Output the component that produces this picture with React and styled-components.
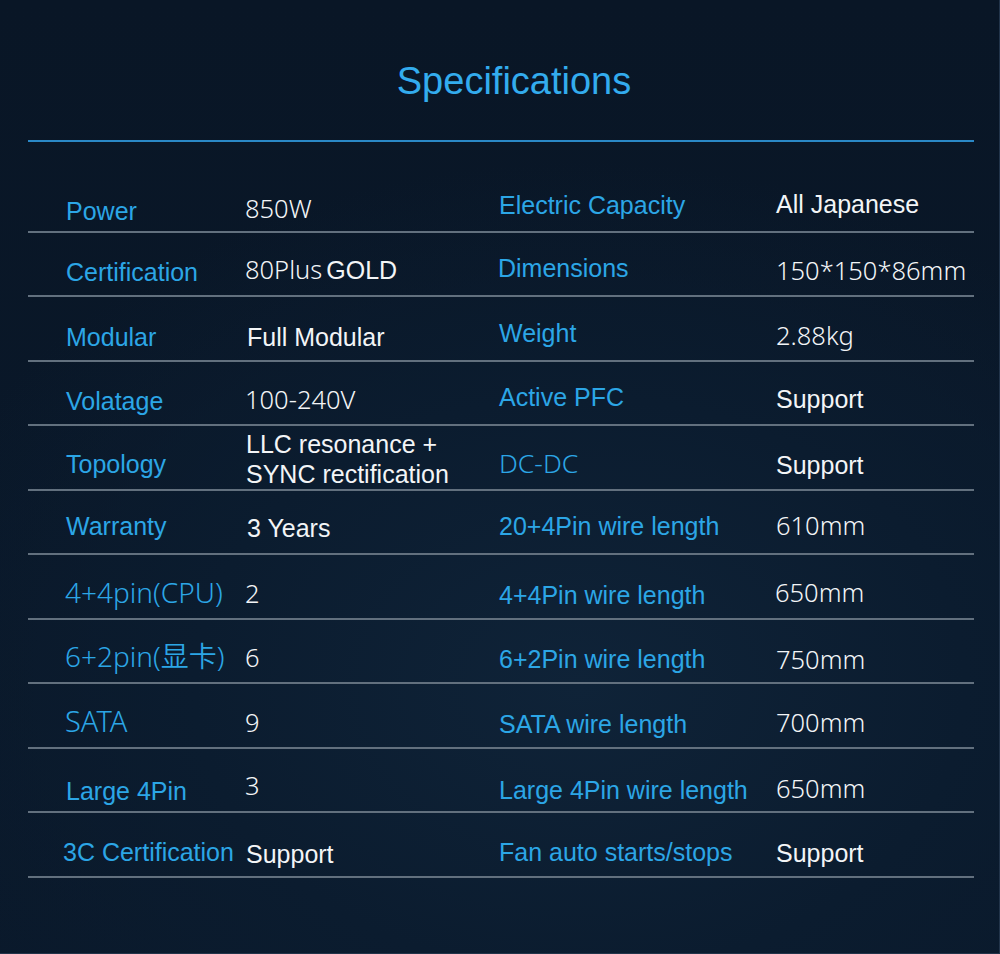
import React from 'react';
import styled, { createGlobalStyle } from 'styled-components';

const arial = '"Liberation Sans", Arial, sans-serif';
const yahei = '"Noto Sans", "Noto Sans CJK SC", sans-serif';

const GlobalStyle = createGlobalStyle`
  html, body {
    margin: 0;
    padding: 0;
    background: #0a1828;
  }
`;

const Page = styled.div`
  width: 1000px;
  height: 954px;
  box-sizing: border-box;
  border-right: 1px solid #22344a;
  border-bottom: 1px solid #22344a;
  background:
    radial-gradient(ellipse 70% 55% at 58% 72%, #0f2338 0%, #0b1c2f 55%, transparent 100%),
    linear-gradient(180deg, #091626 0%, #0a192b 100%);
  padding: 59px 25px 0 28px;
  overflow: hidden;
`;

const Title = styled.h1`
  margin: 0;
  padding-left: 26px;
  text-align: center;
  font-family: ${arial};
  font-weight: 400;
  font-size: 38px;
  line-height: 44px;
  color: #33acee;
`;

const Rule = styled.div`
  margin-top: 37px;
  height: 2px;
  background: #2a88c6;
`;

const Table = styled.div`
  margin-top: 26px;
  display: flex;
  flex-direction: column;
`;

const Row = styled.div`
  display: grid;
  grid-template-columns: 179px 254px 277px 1fr;
  padding-left: 38px;
  height: 64.5px;
  box-sizing: border-box;
  border-bottom: 2px solid #62707e;
`;

const Cell = styled.div`
  display: flex;
  align-items: flex-end;
  padding-bottom: ${p => (p.thin ? 11 : 9) + (p.lift || 0)}px;
  margin-left: ${p => p.nudge || 0}px;
  font-family: ${p => (p.thin ? yahei : arial)};
  font-size: ${p => p.size || 25}px;
  font-weight: ${p => (p.thin ? 350 : 400)};
  line-height: 28px;
  color: ${p => (p.label ? '#2ca6e6' : '#f3f5f7')};
  white-space: nowrap;
`;

const Stack = styled.div`
  display: flex;
  flex-direction: column;
  line-height: 30px;
`;

const Gold = styled.span`
  font-family: ${arial};
  font-weight: 400;
  font-size: 25px;
  margin-left: 4px;
`;

// [text, { thin, size, lift, nudge }]
const rows = [
  [['Power', { lift: -3 }], ['850W', { thin: true, size: 25.5, lift: -2 }], ['Electric Capacity', { lift: 3 }], ['All Japanese', { lift: 4 }]],
  [['Certification'], ['80Plus', { thin: true, size: 25.5, gold: true }], ['Dimensions', { lift: 4, nudge: -1 }], ['150*150*86mm', { thin: true, size: 25.5 }]],
  [['Modular'], ['Full Modular', { nudge: 2 }], ['Weight', { lift: 4 }], ['2.88kg', { thin: true, size: 25.5 }]],
  [['Volatage'], ['100-240V', { thin: true, size: 25.5 }], ['Active PFC', { lift: 4 }], ['Support', { lift: 2 }]],
  [['Topology', { lift: 2 }], [['LLC resonance +', 'SYNC rectification'], { lift: -9, nudge: 1 }], ['DC-DC', { thin: true, size: 26.5, lift: 1 }], ['Support', { lift: 1 }]],
  [['Warranty', { lift: 4 }], ['3 Years', { lift: 2, nudge: 2 }], ['20+4Pin wire length', { lift: 4 }], ['610mm', { thin: true, size: 25.5, lift: 3 }]],
  [['4+4pin(CPU)', { thin: true, size: 28, nudge: -1, lift: 1 }], ['2', { thin: true, size: 25.5 }], ['4+4Pin wire length'], ['650mm', { thin: true, size: 25.5, nudge: -1, lift: 1 }]],
  [['6+2pin(显卡)', { thin: true, size: 28, nudge: -1, lift: 1 }], ['6', { thin: true, size: 25.5 }], ['6+2Pin wire length'], ['750mm', { thin: true, size: 25.5, lift: -2 }]],
  [['SATA', { thin: true, size: 29, nudge: -1, lift: 1 }], ['9', { thin: true, size: 25.5 }], ['SATA wire length'], ['700mm', { thin: true, size: 25.5 }]],
  [['Large 4Pin', { lift: -3 }], ['3', { thin: true, size: 25.5, lift: 1 }], ['Large 4Pin wire length', { lift: -2 }], ['650mm', { thin: true, size: 25.5, lift: -2 }]],
  [['3C Certification', { lift: 1, nudge: -3 }], ['Support', { lift: -1, nudge: 1 }], ['Fan auto starts/stops', { lift: 1 }], ['Support', { lift: 0 }]],
];

const SpecCell = ({ text, opts = {}, label }) => (
  <Cell label={label} thin={opts.thin} size={opts.size} lift={opts.lift} nudge={opts.nudge}>
    {Array.isArray(text) ? (
      <Stack>
        {text.map(line => <span key={line}>{line}</span>)}
      </Stack>
    ) : (
      <span>
        {text}
        {opts.gold && <Gold>GOLD</Gold>}
      </span>
    )}
  </Cell>
);

const App = () => (
  <Page>
    <GlobalStyle />
    <Title>Specifications</Title>
    <Rule />
    <Table>
      {rows.map((cells, i) => (
        <Row key={`spec_row_${i}`}>
          {cells.map(([text, opts], j) => (
            <SpecCell
              key={`spec_cell_${i}_${j}`}
              text={text}
              opts={opts}
              label={j % 2 === 0}
            />
          ))}
        </Row>
      ))}
    </Table>
  </Page>
);

export default App;
